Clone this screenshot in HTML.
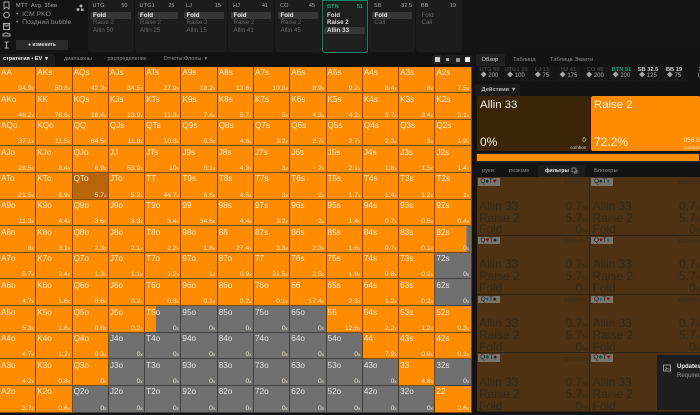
<!DOCTYPE html>
<html><head><meta charset="utf-8">
<style>
html,body{margin:0;padding:0;background:#131313}
body{width:700px;height:413px;overflow:hidden;position:relative;font-family:"Liberation Sans","Noto Sans CJK SC",sans-serif;color:#ddd}
div,span{box-sizing:border-box}
.a{position:absolute;white-space:nowrap}
.card{position:absolute;top:0;width:46px;height:52px;background:#1c1c1d;border-radius:0 0 3px 3px}
.card u{position:absolute;text-decoration:none;font-size:5.5px;color:#aaa;top:3px;left:5px;letter-spacing:.2px}
.card em{position:absolute;font-style:normal;font-size:5.5px;color:#aaa;top:3px;right:6px}
.card p{position:absolute;margin:0;left:3px;right:3px;height:7.5px;line-height:7.5px;padding-left:2.5px;font-size:6.2px;color:#666;border-radius:1px}
.card p.f{top:11.5px;background:#37373a;color:#eee;font-weight:bold}
.card p.r{top:19px}.card p.l{top:26.5px}
.card p.w{color:#ddd;font-weight:bold}
#g{position:absolute;left:0;top:66.5px;width:471.7px;height:346px;display:grid;grid-template-columns:repeat(13,1fr);grid-template-rows:repeat(13,1fr)}
#g i{position:relative;display:block;font-style:normal;background:#ff8c00;border-right:1px solid #7d4c06;border-bottom:1px solid #7d4c06;font-size:8.2px;line-height:9px;padding:1.5px 0 0 1px;color:#f6e8d6;overflow:hidden}
#g i.n{background:#707070;border-color:#414141;color:#e2e2e2}
#g i.d{background:#b86508}
#g b{position:absolute;right:1.5px;bottom:0;font-weight:normal;font-size:6.8px;line-height:7px;color:#f3e4d2}
#g s{text-decoration:none;font-size:4.5px}
#g i.h{background:linear-gradient(90deg,#ff8c00 31%,#707070 31%);border-color:#414141}
#g i.q{background:linear-gradient(90deg,#ff8c00 88%,#707070 88%)}
.ps{position:absolute;top:66.5px;width:25px;height:14px;background:#171717;text-align:center;font-size:5.7px;line-height:6.5px;color:#3f3f3f;font-weight:bold;white-space:nowrap}
.ps span{display:block;font-weight:normal;color:#aaa;font-size:6px}
.ps.g{color:#0fa57f}.ps.w{color:#ccc}
.fc{position:absolute;width:113px;height:58.8px;background:#4e3213;border-right:1px solid #2f2414;border-bottom:1px solid #2f2414;color:#35291a;font-size:12px;line-height:12px}
.fc .bd{position:absolute;left:1px;top:1px;width:22px;height:7.5px;background:#7a756d;font-size:6.5px;line-height:7.5px;color:#1c1c1c;text-align:center}
.fc .bd .h{color:#7d1414}.fc .bd .e{color:#14608f}.fc .bd .c{color:#125a45}
.fc .ev{position:absolute;right:1px;top:3.3px;font-size:5px;line-height:6px;color:#35291a}
.fc .x{position:absolute;left:2.5px;white-space:nowrap}
.fc .y{position:absolute;right:1px;white-space:nowrap}
.fc small{font-size:6px}
</style></head><body>

<!-- top bar -->
<div class="a" style="left:0;top:0;width:700px;height:53px;background:#141414"></div>
<svg class="a" style="left:2px;top:1px" width="9" height="49" fill="none" stroke="#a8a8a8" stroke-width="1">
<path d="M2 1h5v7L4.500 6 2 8z"/><circle cx="4.500" cy="14" r="2.800"/><rect x="1.500" y="22.500" width="6" height="6"/><path d="M3 23v2h3v-2M1 35h7v-2H6l-1-1H3l-1 1H1z"/><path d="M2.500 41h4M4.500 41v6M2.500 47h4"/>
</svg>
<div class="a" style="left:16px;top:3px;font-size:5.5px;color:#aaa;letter-spacing:.2px">MTT&nbsp; Avg. 35вв</div>
<div class="a" style="left:16px;top:11px;font-size:6.8px;color:#8a8a8a;line-height:7.700px">•&nbsp; ICM PKO<br>•&nbsp; Поздний bubble</div>
<div class="a" style="left:16px;top:40px;width:52px;height:10px;background:#2a2a2b;border-radius:1px;font-size:5px;line-height:10px;text-align:center;color:#ddd;font-weight:bold">● изменить</div>
<svg class="a" style="left:76px;top:3px" width="9" height="9" fill="#aaa"><circle cx="2" cy="6.500" r="1.500"/><circle cx="5" cy="3" r="1.500"/><rect x="5" y="5.500" width="2.500" height="2.500"/></svg>

<div class="card" style="left:87.500px"><u>UTG</u><em>50</em><p class="f">Fold</p><p class="r">Raise 2</p><p class="l">Allin 50</p></div>
<div class="card" style="left:134.500px"><u>UTG1</u><em>25</em><p class="f">Fold</p><p class="r">Raise 2</p><p class="l">Allin 25</p></div>
<div class="card" style="left:181px"><u>LJ</u><em>15</em><p class="f">Fold</p><p class="r">Raise 2</p><p class="l">Allin 15</p></div>
<div class="card" style="left:228px"><u>HJ</u><em>41</em><p class="f">Fold</p><p class="r">Raise 2</p><p class="l">Allin 41</p></div>
<div class="card" style="left:275px"><u>CO</u><em>45</em><p class="f">Fold</p><p class="r">Raise 2</p><p class="l">Allin 45</p></div>
<div class="card" style="left:322px;height:53px;background:#1f1f20;border:1px solid #0c8468"><u style="color:#0fa57f;font-weight:bold;left:4px;top:2.500px">BTN</u><em style="color:#0fa57f;font-weight:bold;top:2.500px;right:4px">51</em><p class="w" style="top:10.500px;left:1px;right:2px;padding-left:3px">Fold</p><p class="w" style="top:18px;left:1px;right:2px;padding-left:3px">Raise 2</p><p class="w" style="top:25.500px;left:1px;right:2px;padding-left:3px;background:#37373a">Allin 33</p></div>
<div class="card" style="left:369px"><u>SB</u><em style="right:3px">32.5</em><p class="f">Fold</p><p class="r">Call</p></div>
<div class="card" style="left:416px"><u>BB</u><em>19</em><p class="r" style="top:11.500px">Fold</p><p class="r" style="top:19px">Call</p></div>

<!-- sub tabs -->
<div class="a" style="left:0;top:53px;width:475px;height:13.500px;background:#111"></div>
<div class="a" style="left:0;top:54px;width:55px;height:12.500px;background:#1d1d1e;border-radius:2px 2px 0 0"></div>
<div class="a" style="left:3px;top:56px;font-size:5.500px;line-height:7px;color:#eee;font-weight:bold">стратегия • EV&nbsp; ▾</div>
<div class="a" style="left:64px;top:56px;font-size:5.500px;line-height:7px;color:#888">диапазоны</div>
<div class="a" style="left:107.500px;top:56px;font-size:5.500px;line-height:7px;color:#888">распределение</div>
<div class="a" style="left:163.500px;top:56px;font-size:5.500px;line-height:7px;color:#888">Отчеты:Флопы&nbsp; ▾</div>
<div class="a" style="left:433px;top:55px;width:9px;height:9px;background:#262626"></div>
<div class="a" style="left:434.500px;top:57px;width:5px;height:5px;background:#ccc"></div>
<div class="a" style="left:443px;top:55px;width:30px;height:9px;background:#1d1d1e"></div>
<div class="a" style="left:446px;top:58px;width:3px;height:3px;background:#aaa"></div>
<div class="a" style="left:456px;top:57.500px;width:4px;height:4px;background:#999"></div>
<div class="a" style="left:465px;top:57px;width:5px;height:5px;background:#eee"></div>

<!-- range grid -->
<div id="g">
<i>AA<b>94.9<s>x</s></b></i><i>AKs<b>50.8<s>x</s></b></i><i>AQs<b>42.3<s>x</s></b></i><i>AJs<b>34.5<s>x</s></b></i><i>ATs<b>27.9<s>x</s></b></i><i>A9s<b>18.2<s>x</s></b></i><i>A8s<b>13.6<s>x</s></b></i><i>A7s<b>10.8<s>x</s></b></i><i>A6s<b>8.9<s>x</s></b></i><i>A5s<b>9.2<s>x</s></b></i><i>A4s<b>8.4<s>x</s></b></i><i>A3s<b>8<s>x</s></b></i><i>A2s<b>7.5<s>x</s></b></i>
<i>AKo<b>46.2<s>x</s></b></i><i>KK<b>76.6<s>x</s></b></i><i>KQs<b>18.4<s>x</s></b></i><i>KJs<b>13.9<s>x</s></b></i><i>KTs<b>11.3<s>x</s></b></i><i>K9s<b>7.4<s>x</s></b></i><i>K8s<b>5.7<s>x</s></b></i><i>K7s<b>5<s>x</s></b></i><i>K6s<b>4.3<s>x</s></b></i><i>K5s<b>4.2<s>x</s></b></i><i>K4s<b>3.7<s>x</s></b></i><i>K3s<b>3.4<s>x</s></b></i><i>K2s<b>3.1<s>x</s></b></i>
<i>AQo<b>37.1<s>x</s></b></i><i>KQo<b>11.5<s>x</s></b></i><i>QQ<b>64.5<s>x</s></b></i><i>QJs<b>11.8<s>x</s></b></i><i>QTs<b>10.3<s>x</s></b></i><i>Q9s<b>6.3<s>x</s></b></i><i>Q8s<b>4.6<s>x</s></b></i><i>Q7s<b>3.2<s>x</s></b></i><i>Q6s<b>2.7<s>x</s></b></i><i>Q5s<b>2.7<s>x</s></b></i><i>Q4s<b>2.3<s>x</s></b></i><i>Q3s<b>2<s>x</s></b></i><i>Q2s<b>1.9<s>x</s></b></i>
<i>AJo<b>28.5<s>x</s></b></i><i>KJo<b>8.4<s>x</s></b></i><i>QJo<b>6.9<s>x</s></b></i><i>JJ<b>53.9<s>x</s></b></i><i>JTs<b>10<s>x</s></b></i><i>J9s<b>6.1<s>x</s></b></i><i>J8s<b>4.3<s>x</s></b></i><i>J7s<b>3<s>x</s></b></i><i>J6s<b>2<s>x</s></b></i><i>J5s<b>2.1<s>x</s></b></i><i>J4s<b>1.8<s>x</s></b></i><i>J3s<b>1.5<s>x</s></b></i><i>J2s<b>1.4<s>x</s></b></i>
<i>ATo<b>21.5<s>x</s></b></i><i>KTo<b>6.9<s>x</s></b></i><i class="d">QTo<b>5.7<s>x</s></b></i><i>JTo<b>5.2<s>x</s></b></i><i>TT<b>44.7<s>x</s></b></i><i>T9s<b>6.6<s>x</s></b></i><i>T8s<b>4.5<s>x</s></b></i><i>T7s<b>3<s>x</s></b></i><i>T6s<b>2<s>x</s></b></i><i>T5s<b>1.7<s>x</s></b></i><i>T4s<b>1.4<s>x</s></b></i><i>T3s<b>1.2<s>x</s></b></i><i>T2s<b>1<s>x</s></b></i>
<i>A9o<b>11.3<s>x</s></b></i><i>K9o<b>4.4<s>x</s></b></i><i>Q9o<b>3.6<s>x</s></b></i><i>J9o<b>3.3<s>x</s></b></i><i>T9o<b>3.4<s>x</s></b></i><i>99<b>34.6<s>x</s></b></i><i>98s<b>4.4<s>x</s></b></i><i>97s<b>3.2<s>x</s></b></i><i>96s<b>2<s>x</s></b></i><i>95s<b>1.4<s>x</s></b></i><i>94s<b>0.7<s>x</s></b></i><i>93s<b>0.5<s>x</s></b></i><i>92s<b>0.4<s>x</s></b></i>
<i>A8o<b>8<s>x</s></b></i><i>K8o<b>3.1<s>x</s></b></i><i>Q8o<b>2.3<s>x</s></b></i><i>J8o<b>2.1<s>x</s></b></i><i>T8o<b>2.2<s>x</s></b></i><i>98o<b>1.8<s>x</s></b></i><i>88<b>27.4<s>x</s></b></i><i>87s<b>3.3<s>x</s></b></i><i>86s<b>2.3<s>x</s></b></i><i>85s<b>1.6<s>x</s></b></i><i>84s<b>0.7<s>x</s></b></i><i>83s<b>0.1<s>x</s></b></i><i class="q">82s<b>0<s>x</s></b></i>
<i>A7o<b>5.7<s>x</s></b></i><i>K7o<b>2.4<s>x</s></b></i><i>Q7o<b>1.3<s>x</s></b></i><i>J7o<b>1.1<s>x</s></b></i><i>T7o<b>1.2<s>x</s></b></i><i>97o<b>1<s>x</s></b></i><i>87o<b>0.9<s>x</s></b></i><i>77<b>21.5<s>x</s></b></i><i>76s<b>2.5<s>x</s></b></i><i>75s<b>1.9<s>x</s></b></i><i>74s<b>0.8<s>x</s></b></i><i>73s<b>0.2<s>x</s></b></i><i class="n">72s<b>0<s>x</s></b></i>
<i>A6o<b>4.7<s>x</s></b></i><i>K6o<b>1.6<s>x</s></b></i><i>Q6o<b>0.6<s>x</s></b></i><i>J6o<b>0.2<s>x</s></b></i><i>T6o<b>0.3<s>x</s></b></i><i>96o<b>0.1<s>x</s></b></i><i>86o<b>0.2<s>x</s></b></i><i>76o<b>0.1<s>x</s></b></i><i>66<b>17.4<s>x</s></b></i><i>65s<b>2.3<s>x</s></b></i><i>64s<b>1.2<s>x</s></b></i><i>63s<b>0.2<s>x</s></b></i><i class="n">62s<b>0<s>x</s></b></i>
<i>A5o<b>5.3<s>x</s></b></i><i>K5o<b>1.6<s>x</s></b></i><i>Q5o<b>0.6<s>x</s></b></i><i>J5o<b>0.2<s>x</s></b></i><i class="h">T5o<b>0<s>x</s></b></i><i class="n">95o<b>0<s>x</s></b></i><i class="n">85o<b>0<s>x</s></b></i><i class="n">75o<b>0<s>x</s></b></i><i class="n">65o<b>0<s>x</s></b></i><i>55<b>12.6<s>x</s></b></i><i>54s<b>2.2<s>x</s></b></i><i>53s<b>1.2<s>x</s></b></i><i>52s<b>0.3<s>x</s></b></i>
<i>A4o<b>4.7<s>x</s></b></i><i>K4o<b>1.2<s>x</s></b></i><i>Q4o<b>0.3<s>x</s></b></i><i class="n">J4o<b>0<s>x</s></b></i><i class="n">T4o<b>0<s>x</s></b></i><i class="n">94o<b>0<s>x</s></b></i><i class="n">84o<b>0<s>x</s></b></i><i class="n">74o<b>0<s>x</s></b></i><i class="n">64o<b>0<s>x</s></b></i><i class="n">54o<b>0<s>x</s></b></i><i>44<b>7.9<s>x</s></b></i><i>43s<b>0.8<s>x</s></b></i><i>42s<b>0.1<s>x</s></b></i>
<i>A3o<b>4.2<s>x</s></b></i><i>K3o<b>0.8<s>x</s></b></i><i>Q3o<b>0<s>x</s></b></i><i class="n">J3o<b>0<s>x</s></b></i><i class="n">T3o<b>0<s>x</s></b></i><i class="n">93o<b>0<s>x</s></b></i><i class="n">83o<b>0<s>x</s></b></i><i class="n">73o<b>0<s>x</s></b></i><i class="n">63o<b>0<s>x</s></b></i><i class="n">53o<b>0<s>x</s></b></i><i class="n">43o<b>0<s>x</s></b></i><i>33<b>4.8<s>x</s></b></i><i class="n">32s<b>0<s>x</s></b></i>
<i>A2o<b>3.7<s>x</s></b></i><i>K2o<b>0.6<s>x</s></b></i><i class="n">Q2o<b>0<s>x</s></b></i><i class="n">J2o<b>0<s>x</s></b></i><i class="n">T2o<b>0<s>x</s></b></i><i class="n">92o<b>0<s>x</s></b></i><i class="n">82o<b>0<s>x</s></b></i><i class="n">72o<b>0<s>x</s></b></i><i class="n">62o<b>0<s>x</s></b></i><i class="n">52o<b>0<s>x</s></b></i><i class="n">42o<b>0<s>x</s></b></i><i class="n">32o<b>0<s>x</s></b></i><i>22<b>2.6<s>x</s></b></i>
</div>

<!-- right panel -->
<div class="a" style="left:472px;top:53px;width:228px;height:360px;background:#131313"></div>
<div class="a" style="left:476px;top:54px;width:29px;height:12px;background:#202021;border-radius:2px 2px 0 0"></div>
<div class="a" style="left:481.500px;top:56.500px;font-size:5.800px;line-height:7px;color:#ddd">Обзор</div>
<div class="a" style="left:513px;top:56.500px;font-size:5.800px;line-height:7px;color:#888">Таблица</div>
<div class="a" style="left:550px;top:56.500px;font-size:5.800px;line-height:7px;color:#888">Таблица Эквити</div>

<div class="ps" style="left:477px">UTG 50<span>◆ 200</span></div>
<div class="ps" style="left:503.500px">UTG1 25<span>◆ 100</span></div>
<div class="ps" style="left:529.500px">LJ 15<span>◆ 75</span></div>
<div class="ps" style="left:556px">HJ 41<span>◆ 175</span></div>
<div class="ps" style="left:582.500px">CO 45<span>◆ 200</span></div>
<div class="ps g" style="left:609px">BTN 51<span>◆ 200</span></div>
<div class="ps w" style="left:635.500px">SB 32.5<span>◆ 125</span></div>
<div class="ps w" style="left:661.500px">BB 19<span>◆ 75</span></div>
<div class="ps w" style="left:688px;background:none">3<span>Ш</span></div>

<div class="a" style="left:475px;top:84px;width:45px;height:12px;background:#1c1c1d;border-radius:2px 2px 0 0"></div>
<div class="a" style="left:481.500px;top:85.500px;font-size:5.800px;line-height:8px;color:#bbb;font-weight:bold">Действия &nbsp;▾</div>

<div class="a" style="left:476.500px;top:96px;width:113px;height:55px;background:#3a2509;border-radius:2px"></div>
<div class="a" style="left:591px;top:96px;width:109px;height:55px;background:#ff8c00;border-radius:2px"></div>
<div class="a" style="left:480px;top:98.500px;font-size:11.400px;line-height:13px;color:#f2f2f2">Allin 33</div>
<div class="a" style="left:594px;top:98.500px;font-size:11.400px;line-height:13px;color:#fbeedd">Raise 2</div>
<div class="a" style="left:480px;top:135px;font-size:12px;line-height:15px;color:#f2f2f2">0%</div>
<div class="a" style="left:594px;top:135px;font-size:12px;line-height:15px;color:#fbeedd">72.2%</div>
<div class="a" style="right:114px;top:137px;font-size:6.500px;line-height:8px;color:#ddd">0</div>
<div class="a" style="right:114px;top:145px;font-size:4.500px;line-height:5px;color:#ccc">combos</div>
<div class="a" style="left:683.500px;top:137px;font-size:6.500px;line-height:8px;color:#f5e6d2">956.8</div>
<div class="a" style="left:684px;top:145px;font-size:4.500px;line-height:5px;color:#f5e6d2">combos</div>

<div class="a" style="left:476px;top:153px;width:224px;height:9px;background:#ff8c00;border:1px solid #2a2a2a;border-radius:1px"></div>

<div class="a" style="left:537.500px;top:165px;width:47.500px;height:12px;background:#1e1e1f;border-radius:3px 3px 0 0"></div>
<div class="a" style="left:482px;top:167.500px;font-size:5.800px;line-height:7px;color:#888">руки</div>
<div class="a" style="left:509px;top:167.500px;font-size:5.800px;line-height:7px;color:#888">резюме</div>
<div class="a" style="left:545px;top:167.500px;font-size:5.200px;line-height:7px;color:#e8e8e8;font-weight:bold">фильтры</div>
<svg class="a" style="left:571px;top:167px" width="7" height="7" fill="none" stroke="#999" stroke-width=".8"><rect x="1" y="1" width="4" height="4" rx="1"/><path d="M3 6h3V3"/></svg>
<div class="a" style="left:594px;top:167.500px;font-size:5.800px;line-height:7px;color:#888">Блокеры</div>

<!-- filter cells -->
<div class="fc" style="left:476.500px;top:177px"><div class="bd">Q♠T<span class="h">♥</span></div><div class="ev">EV/POT%</div><div class="x" style="top:22.700px">Allin 33</div><div class="x" style="top:34.500px">Raise 2</div><div class="x" style="top:46.300px">Fold</div><div class="y" style="top:22.700px">0.7<small>%</small></div><div class="y" style="top:34.500px">5.7<small>%</small></div><div class="y" style="top:46.300px">0<small>%</small></div></div>
<div class="fc" style="left:590px;top:177px"><div class="bd">Q♠T<span class="e">♦</span></div><div class="ev">EV/POT%</div><div class="x" style="top:22.700px">Allin 33</div><div class="x" style="top:34.500px">Raise 2</div><div class="x" style="top:46.300px">Fold</div><div class="y" style="top:22.700px">0.7<small>%</small></div><div class="y" style="top:34.500px">5.7<small>%</small></div><div class="y" style="top:46.300px">0<small>%</small></div></div>
<div class="fc" style="left:476.500px;top:235.800px"><div class="bd">Q<span class="h">♥</span>T♠</div><div class="ev">EV/POT%</div><div class="x" style="top:22.700px">Allin 33</div><div class="x" style="top:34.500px">Raise 2</div><div class="x" style="top:46.300px">Fold</div><div class="y" style="top:22.700px">0.7<small>%</small></div><div class="y" style="top:34.500px">5.7<small>%</small></div><div class="y" style="top:46.300px">0<small>%</small></div></div>
<div class="fc" style="left:590px;top:235.800px"><div class="bd">Q<span class="h">♥</span>T<span class="e">♦</span></div><div class="ev">EV/POT%</div><div class="x" style="top:22.700px">Allin 33</div><div class="x" style="top:34.500px">Raise 2</div><div class="x" style="top:46.300px">Fold</div><div class="y" style="top:22.700px">0.7<small>%</small></div><div class="y" style="top:34.500px">5.7<small>%</small></div><div class="y" style="top:46.300px">0<small>%</small></div></div>
<div class="fc" style="left:476.500px;top:294.600px"><div class="bd">Q<span class="e">♦</span>T♠</div><div class="ev">EV/POT%</div><div class="x" style="top:22.700px">Allin 33</div><div class="x" style="top:34.500px">Raise 2</div><div class="x" style="top:46.300px">Fold</div><div class="y" style="top:22.700px">0.7<small>%</small></div><div class="y" style="top:34.500px">5.7<small>%</small></div><div class="y" style="top:46.300px">0<small>%</small></div></div>
<div class="fc" style="left:590px;top:294.600px"><div class="bd">Q<span class="e">♦</span>T<span class="h">♥</span></div><div class="ev">EV/POT%</div><div class="x" style="top:22.700px">Allin 33</div><div class="x" style="top:34.500px">Raise 2</div><div class="x" style="top:46.300px">Fold</div><div class="y" style="top:22.700px">0.7<small>%</small></div><div class="y" style="top:34.500px">5.7<small>%</small></div><div class="y" style="top:46.300px">0<small>%</small></div></div>
<div class="fc" style="left:476.500px;top:353.400px"><div class="bd">Q<span class="c">♣</span>T♠</div><div class="ev">EV/POT%</div><div class="x" style="top:22.700px">Allin 33</div><div class="x" style="top:34.500px">Raise 2</div><div class="x" style="top:46.300px">Fold</div><div class="y" style="top:22.700px">0.7<small>%</small></div><div class="y" style="top:34.500px">5.7<small>%</small></div><div class="y" style="top:46.300px">0<small>%</small></div></div>
<div class="fc" style="left:590px;top:353.400px"><div class="bd">Q<span class="c">♣</span>T<span class="h">♥</span></div><div class="ev">EV/POT%</div><div class="x" style="top:22.700px">Allin 33</div><div class="x" style="top:34.500px">Raise 2</div><div class="x" style="top:46.300px">Fold</div><div class="y" style="top:22.700px">0.7<small>%</small></div><div class="y" style="top:34.500px">5.7<small>%</small></div><div class="y" style="top:46.300px">0<small>%</small></div></div>

<!-- toast -->
<div class="a" style="left:657px;top:354.500px;width:43px;height:55.500px;background:#1e1e1f"></div>
<svg class="a" style="left:663px;top:364px" width="8" height="8" fill="none" stroke="#b5b5b5" stroke-width=".8"><rect x=".5" y="1" width="7" height="6"/><path d="M2.500 3l1.500 1.500L2.500 6M5 5h1.500"/></svg>
<div class="a" style="left:677px;top:363.300px;font-size:6px;line-height:8px;color:#eee;font-weight:bold">Updates</div>
<div class="a" style="left:677px;top:372px;font-size:6px;line-height:8px;color:#999">Required</div>
</body></html>
